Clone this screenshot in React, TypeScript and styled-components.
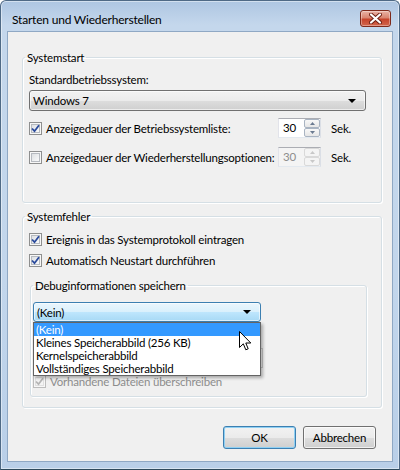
import styled, { createGlobalStyle } from 'styled-components';

const GlobalStyle = createGlobalStyle`
  html, body {
    margin: 0;
    padding: 0;
  }
  body {
    width: 400px;
    height: 470px;
    overflow: hidden;
    background: #ffffff;
    font-family: Lato, 'Noto Sans', 'Liberation Sans', sans-serif;
    font-size: 11.5px;
    letter-spacing: -0.2px;
    color: #000;
  }
`;

const Window = styled.div`
  position: relative;
  width: 400px;
  height: 470px;
  box-sizing: border-box;
  display: flex;
  flex-direction: column;
  border: 1px solid #4f6a86;
  border-bottom-color: #2e4a5c;
  border-radius: 6px 6px 0 0;
  padding: 0 6px 7px 6px;
  background: linear-gradient(to bottom, #aec6e2 0px, #c4d7ec 24px, #c2d6ec 60%, #b9cfe8 100%);
  box-shadow: inset 0 0 0 1px rgba(255, 255, 255, 0.45);
`;

const TitleBar = styled.div`
  height: 30px;
  flex: none;
  display: flex;
  align-items: flex-start;
  justify-content: space-between;
  padding-left: 5px;
`;

const Title = styled.div`
  margin-top: 11px;
  font-size: 12px;
  line-height: 15px;
  color: #000;
`;

const CloseButton = styled.div`
  width: 31px;
  height: 17px;
  margin-top: 9px;
  margin-right: 2px;
  box-sizing: border-box;
  border: 1px solid #7d2a1c;
  border-radius: 3px;
  background: linear-gradient(to bottom, #e9b3a6 0%, #d98571 45%, #c6442c 55%, #d2664c 100%);
  box-shadow: inset 0 0 0 1px rgba(255, 255, 255, 0.35);
  display: flex;
  align-items: center;
  justify-content: center;
`;

const Client = styled.div`
  flex: 1;
  background: #f0f0f0;
  border: 1px solid #8fa8c4;
  display: flex;
  flex-direction: column;
  padding: 18px 10px 0 14px;
`;

const Group = styled.fieldset<{ $pad: string }>`
  margin: 0;
  min-width: 0;
  border: 1px solid #d5dfe5;
  border-radius: 3px;
  box-shadow: inset 1px 1px 0 #ffffff, 1px 1px 0 #ffffff;
  padding: ${(p) => p.$pad};
  display: flex;
  flex-direction: column;
`;

const Legend = styled.legend<{ $shift: number }>`
  padding: 0 2px;
  margin-left: ${(p) => p.$shift}px;
  line-height: 15px;
`;

const Label = styled.div`
  line-height: 15px;
  white-space: nowrap;
`;

const Combo = styled.div<{ $focused?: boolean; $width?: number }>`
  position: relative;
  box-sizing: border-box;
  height: ${(p) => (p.$focused ? 20 : 21)}px;
  width: ${(p) => (p.$width ? `${p.$width}px` : '100%')};
  border: 1px solid ${(p) => (p.$focused ? '#3c7fb1' : '#707070')};
  border-radius: 3px;
  background: ${(p) =>
    p.$focused
      ? 'linear-gradient(to bottom, #eaf6fd 0%, #d9f0fc 50%, #bee6fd 51%, #a7d9f5 100%)'
      : 'linear-gradient(to bottom, #f2f2f2 0%, #ebebeb 50%, #dddddd 51%, #cfcfcf 100%)'};
  box-shadow: inset 0 0 0 1px rgba(255, 255, 255, 0.6);
  display: flex;
  align-items: center;
  padding: 0 9px 0 3px;
  line-height: 15px;
`;

const ComboText = styled.span`
  flex: 1;
`;

const Arrow = styled.span`
  width: 0;
  height: 0;
  border-left: 4px solid transparent;
  border-right: 4px solid transparent;
  border-top: 4px solid #000;
`;

const OptionRow = styled.div<{ $top: number }>`
  margin-top: ${(p) => p.$top}px;
  height: 20px;
  display: flex;
  align-items: center;
`;

const CheckRow = styled.label<{ $top: number; $disabled?: boolean }>`
  margin-top: ${(p) => p.$top}px;
  height: 15px;
  display: flex;
  align-items: center;
  gap: 4px;
  color: ${(p) => (p.$disabled ? '#8d8d8d' : '#000')};
  white-space: nowrap;
`;

const CheckLabel = styled.span<{ $gap?: number }>`
  flex: 1;
  margin-left: ${(p) => p.$gap ?? 0}px;
  line-height: 15px;
  white-space: nowrap;
`;

const Box = styled.span<{ $disabled?: boolean }>`
  flex: none;
  width: 13px;
  height: 13px;
  box-sizing: border-box;
  border: 1px solid ${(p) => (p.$disabled ? '#bcbcbc' : '#8e8f8f')};
  background: ${(p) =>
    p.$disabled ? '#f4f4f4' : 'linear-gradient(135deg, #d6d9dd 0%, #f4f5f6 70%, #ffffff 100%)'};
  box-shadow: inset 0 0 0 1px #f7f7f7, inset 0 0 0 2px ${(p) => (p.$disabled ? '#e0e0e0' : '#b6bac0')};
  display: flex;
  align-items: center;
  justify-content: center;
`;

const Spinner = styled.div<{ $disabled?: boolean }>`
  flex: none;
  width: 43px;
  height: 20px;
  box-sizing: border-box;
  border: 1px solid #abadb3;
  border-bottom-color: #e3e9ef;
  border-left-color: #e2e3ea;
  border-right-color: #dbdfe6;
  display: flex;
  color: ${(p) => (p.$disabled ? '#8d8d8d' : '#000')};
  background: ${(p) => (p.$disabled ? '#f4f4f4' : '#fff')};
`;

const SpinValue = styled.span`
  flex: 1;
  padding-left: 4px;
  line-height: 18px;
`;

const SpinButtons = styled.div`
  width: 16px;
  display: flex;
  flex-direction: column;
`;

const SpinButton = styled.div<{ $disabled?: boolean }>`
  flex: 1;
  box-sizing: border-box;
  border: 1px solid ${(p) => (p.$disabled ? '#d9d9d9' : '#a9b4c2')};
  border-radius: 2px;
  background: ${(p) =>
    p.$disabled ? '#f4f4f4' : 'linear-gradient(to bottom, #f8f8f8 0%, #e6e6e6 100%)'};
  display: flex;
  align-items: center;
  justify-content: center;
`;

const Unit = styled.span`
  width: 35px;
  margin-left: 10px;
  line-height: 15px;
`;

const DropWrap = styled.div`
  position: relative;
  width: 228px;
`;

const DropList = styled.div`
  position: absolute;
  left: 0;
  top: 100%;
  width: 228px;
  box-sizing: border-box;
  background: #fff;
  border: 1px solid #646464;
  box-shadow: 2px 2px 3px rgba(0, 0, 0, 0.3);
  z-index: 5;
`;

const DropItem = styled.div<{ $selected?: boolean }>`
  height: 13px;
  line-height: 13px;
  padding-left: 2px;
  white-space: nowrap;
  background: ${(p) => (p.$selected ? '#3399ff' : 'transparent')};
  color: ${(p) => (p.$selected ? '#fff' : '#000')};
`;

const Edit = styled.div`
  margin-top: 26px;
  width: 230px;
  height: 20px;
  box-sizing: border-box;
  border: 1px solid #c9c9c9;
  background: #f4f4f4;
`;

const ButtonBar = styled.div`
  margin-top: 18px;
  padding-right: 6px;
  display: flex;
  justify-content: flex-end;
  gap: 7px;
`;

const Button = styled.button<{ $default?: boolean }>`
  width: 73px;
  height: 23px;
  box-sizing: border-box;
  font-family: inherit;
  font-size: 11.5px;
  letter-spacing: -0.2px;
  color: #000;
  padding: 0;
  border: 1px solid ${(p) => (p.$default ? '#3c7fb1' : '#707070')};
  border-radius: 3px;
  background: linear-gradient(to bottom, #f2f2f2 0%, #ebebeb 50%, #dddddd 51%, #cfcfcf 100%);
  box-shadow: inset 0 0 0 1px ${(p) => (p.$default ? '#8fd0f3' : 'rgba(255,255,255,0.7)')};
`;

const Cursor = styled.svg`
  position: absolute;
  left: 238px;
  top: 330px;
  z-index: 10;
`;

function Check({ checked, disabled }: { checked: boolean; disabled?: boolean }) {
  return (
    <Box $disabled={disabled}>
      {checked && (
        <svg width="9" height="9" viewBox="0 0 9 9">
          <path
            d="M1 4.5 L3.5 7.2 L8 1.2"
            fill="none"
            stroke={disabled ? '#b5b5b5' : '#2a4a9c'}
            strokeWidth="1.8"
          />
        </svg>
      )}
    </Box>
  );
}

function SpinArrow({ up, disabled }: { up?: boolean; disabled?: boolean }) {
  return (
    <svg width="5" height="3" viewBox="0 0 5 3">
      <path d={up ? 'M0 3 L2.5 0 L5 3 Z' : 'M0 0 L2.5 3 L5 0 Z'} fill={disabled ? '#c8c8c8' : '#6a7a90'} />
    </svg>
  );
}

function Spin({ value, disabled }: { value: string; disabled?: boolean }) {
  return (
    <Spinner $disabled={disabled}>
      <SpinValue>{value}</SpinValue>
      <SpinButtons>
        <SpinButton $disabled={disabled}>
          <SpinArrow up disabled={disabled} />
        </SpinButton>
        <SpinButton $disabled={disabled}>
          <SpinArrow disabled={disabled} />
        </SpinButton>
      </SpinButtons>
    </Spinner>
  );
}

const dumpOptions = [
  '(Kein)',
  'Kleines Speicherabbild (256 KB)',
  'Kernelspeicherabbild',
  'Vollständiges Speicherabbild',
];

export default function App() {
  return (
    <>
      <GlobalStyle />
      <Window>
        <TitleBar>
          <Title>Starten und Wiederherstellen</Title>
          <CloseButton>
            <svg width="13" height="11" viewBox="0 0 13 11">
              <path
                d="M2 1.5 L11 9.5 M11 1.5 L2 9.5"
                stroke="#6a1e12"
                strokeWidth="4"
                strokeLinecap="round"
              />
              <path
                d="M2 1.5 L11 9.5 M11 1.5 L2 9.5"
                stroke="#ffffff"
                strokeWidth="2.2"
                strokeLinecap="round"
              />
            </svg>
          </CloseButton>
        </TitleBar>
        <Client>
          <Group $pad="7px 15px 35px 6px">
            <Legend $shift={-4}>Systemstart</Legend>
            <Label>Standardbetriebssystem:</Label>
            <Combo style={{ marginTop: 3 }}>
              <ComboText>Windows 7</ComboText>
              <Arrow />
            </Combo>
            <OptionRow $top={7}>
              <Check checked />
              <CheckLabel $gap={4}>Anzeigedauer der Betriebssystemliste:</CheckLabel>
              <Spin value="30" />
              <Unit>Sek.</Unit>
            </OptionRow>
            <OptionRow $top={9}>
              <Check checked={false} />
              <CheckLabel $gap={4}>Anzeigedauer der Wiederherstellungsoptionen:</CheckLabel>
              <Spin value="30" disabled />
              <Unit>Sek.</Unit>
            </OptionRow>
          </Group>
          <Group $pad="8px 15px 10px 6px" style={{ marginTop: 6 }}>
            <Legend $shift={-4}>Systemfehler</Legend>
            <CheckRow $top={0}>
              <Check checked />
              <CheckLabel>Ereignis in das Systemprotokoll eintragen</CheckLabel>
            </CheckRow>
            <CheckRow $top={6}>
              <Check checked />
              <CheckLabel>Automatisch Neustart durchführen</CheckLabel>
            </CheckRow>
            <Group $pad="9px 6px 7px 2px" style={{ marginTop: 10, marginLeft: 1, marginRight: -1 }}>
              <Legend $shift={0}>Debuginformationen speichern</Legend>
              <DropWrap>
                <Combo $focused $width={228}>
                  <ComboText>(Kein)</ComboText>
                  <Arrow />
                </Combo>
                <DropList>
                  {dumpOptions.map((o, i) => (
                    <DropItem key={o} $selected={i === 0}>
                      {o}
                    </DropItem>
                  ))}
                </DropList>
              </DropWrap>
              <Edit />
              <CheckRow $top={6} $disabled>
                <Check checked disabled />
                <CheckLabel>Vorhandene Dateien überschreiben</CheckLabel>
              </CheckRow>
            </Group>
          </Group>
          <ButtonBar>
            <Button $default>OK</Button>
            <Button>Abbrechen</Button>
          </ButtonBar>
        </Client>
        <Cursor width="13" height="21" viewBox="0 0 13 21">
          <path
            d="M0.5 0.5 L0.5 16.5 L4.3 12.8 L6.8 18.8 L9.2 17.8 L6.8 12 L11.8 12 Z"
            fill="#ffffff"
            stroke="#000000"
            strokeWidth="1"
            strokeLinejoin="miter"
          />
        </Cursor>
      </Window>
    </>
  );
}
